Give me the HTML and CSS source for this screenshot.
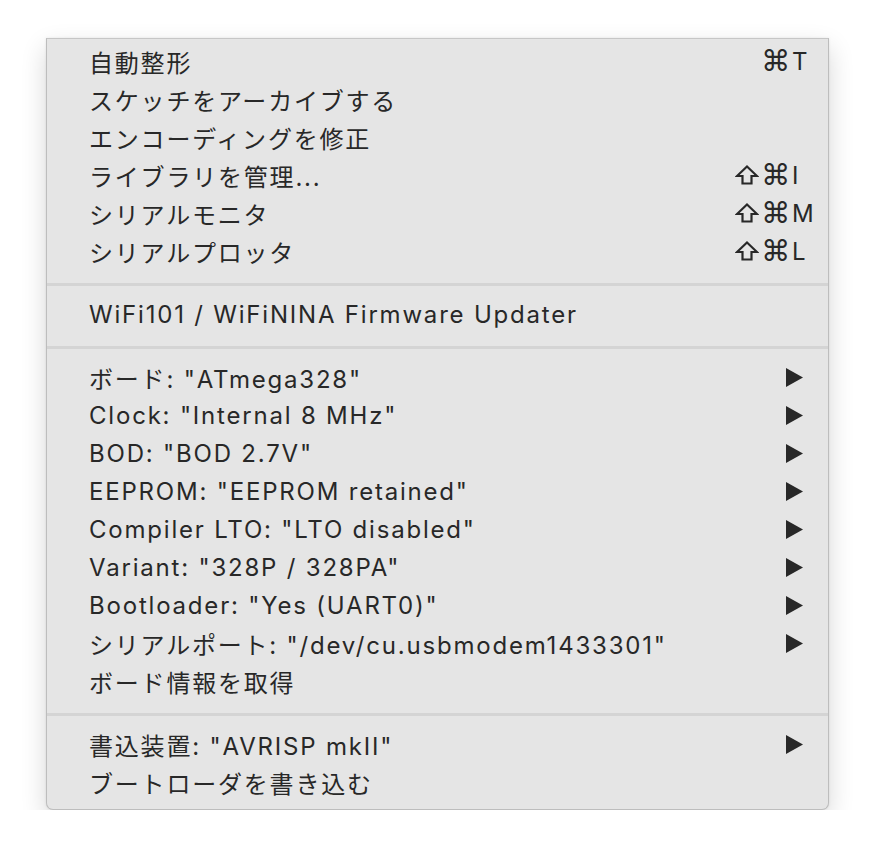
FILE: index.html
```html
<!DOCTYPE html>
<html lang="ja">
<head>
<meta charset="utf-8">
<link rel="stylesheet" href="styles.css">
</head>
<body>
<div class="menu">
  <div class="item"><span class="label">自動整形</span><span class="sc"><span class="mod"><span class="cmd">⌘</span></span><span class="key">T</span></span></div>
  <div class="item"><span class="label">スケッチをアーカイブする</span></div>
  <div class="item"><span class="label">エンコーディングを修正</span></div>
  <div class="item"><span class="label">ライブラリを管理...</span><span class="sc"><span class="mod"><svg class="shift" viewBox="0 0 24 20"><path d="M12 1.5 L22 11 L16.5 11 L16.5 18.5 L7.5 18.5 L7.5 11 L2 11 Z"/></svg><span class="cmd">⌘</span></span><span class="key">I</span></span></div>
  <div class="item"><span class="label">シリアルモニタ</span><span class="sc"><span class="mod"><svg class="shift" viewBox="0 0 24 20"><path d="M12 1.5 L22 11 L16.5 11 L16.5 18.5 L7.5 18.5 L7.5 11 L2 11 Z"/></svg><span class="cmd">⌘</span></span><span class="key">M</span></span></div>
  <div class="item"><span class="label">シリアルプロッタ</span><span class="sc"><span class="mod"><svg class="shift" viewBox="0 0 24 20"><path d="M12 1.5 L22 11 L16.5 11 L16.5 18.5 L7.5 18.5 L7.5 11 L2 11 Z"/></svg><span class="cmd">⌘</span></span><span class="key">L</span></span></div>
  <div class="sep"></div>
  <div class="item"><span class="label">WiFi101 / WiFiNINA Firmware Updater</span></div>
  <div class="sep"></div>
  <div class="item"><span class="label">ボード: "ATmega328"</span><svg class="arrow" viewBox="0 0 17 19"><path d="M0 0 L17 9.5 L0 19 Z"/></svg></div>
  <div class="item"><span class="label">Clock: "Internal 8 MHz"</span><svg class="arrow" viewBox="0 0 17 19"><path d="M0 0 L17 9.5 L0 19 Z"/></svg></div>
  <div class="item"><span class="label">BOD: "BOD 2.7V"</span><svg class="arrow" viewBox="0 0 17 19"><path d="M0 0 L17 9.5 L0 19 Z"/></svg></div>
  <div class="item"><span class="label">EEPROM: "EEPROM retained"</span><svg class="arrow" viewBox="0 0 17 19"><path d="M0 0 L17 9.5 L0 19 Z"/></svg></div>
  <div class="item"><span class="label">Compiler LTO: "LTO disabled"</span><svg class="arrow" viewBox="0 0 17 19"><path d="M0 0 L17 9.5 L0 19 Z"/></svg></div>
  <div class="item"><span class="label">Variant: "328P / 328PA"</span><svg class="arrow" viewBox="0 0 17 19"><path d="M0 0 L17 9.5 L0 19 Z"/></svg></div>
  <div class="item"><span class="label">Bootloader: "Yes (UART0)"</span><svg class="arrow" viewBox="0 0 17 19"><path d="M0 0 L17 9.5 L0 19 Z"/></svg></div>
  <div class="item"><span class="label">シリアルポート: "/dev/cu.usbmodem1433301"</span><svg class="arrow" viewBox="0 0 17 19"><path d="M0 0 L17 9.5 L0 19 Z"/></svg></div>
  <div class="item"><span class="label">ボード情報を取得</span></div>
  <div class="sep"></div>
  <div class="item"><span class="label">書込装置: "AVRISP mkII"</span><svg class="arrow" viewBox="0 0 17 19"><path d="M0 0 L17 9.5 L0 19 Z"/></svg></div>
  <div class="item"><span class="label">ブートローダを書き込む</span></div>
</div>
</body>
</html>
```

FILE: styles.css
```css
html, body {
  margin: 0;
  padding: 0;
  background: #ffffff;
}
body {
  padding: 38px 0 0 46px;
  font-family: "Inter", "Noto Sans CJK JP", sans-serif;
  font-size: 24px;
  letter-spacing: 1.8px;
  color: #282828;
}
.menu {
  width: 781px;
  height: 767px;
  box-sizing: content-box;
  background: #e5e5e5;
  border: 1px solid #bdbdbd;
  border-top-color: #c6c6c6;
  border-radius: 0 0 7px 7px;
  box-shadow: 0 10px 26px rgba(0, 0, 0, 0.16), 0 0 3px rgba(0, 0, 0, 0.08);
  padding-top: 3px;
  display: flex;
  flex-direction: column;
}
.item {
  height: 38px;
  display: flex;
  align-items: center;
  padding: 0 14px 0 42px;
  white-space: nowrap;
}
.label {
  flex: 1;
}
.sc {
  display: flex;
  align-items: center;
  letter-spacing: 0;
}
.mod {
  width: 56px;
  display: flex;
  justify-content: flex-end;
  align-items: center;
}
.cmd {
  font-family: "DejaVu Sans", sans-serif;
  font-size: 29px;
  line-height: 1;
}
.shift {
  width: 24px;
  height: 20px;
  margin-right: 2px;
  fill: none;
  stroke: #282828;
  stroke-width: 2.2;
  stroke-linejoin: miter;
}
.key {
  width: 22px;
  margin-left: 2px;
}
.arrow {
  width: 17px;
  height: 19px;
  margin-right: 11px;
  fill: #282828;
}
.sep {
  height: 3px;
  background: #d4d4d4;
  margin: 13px 0 9px;
}
```
